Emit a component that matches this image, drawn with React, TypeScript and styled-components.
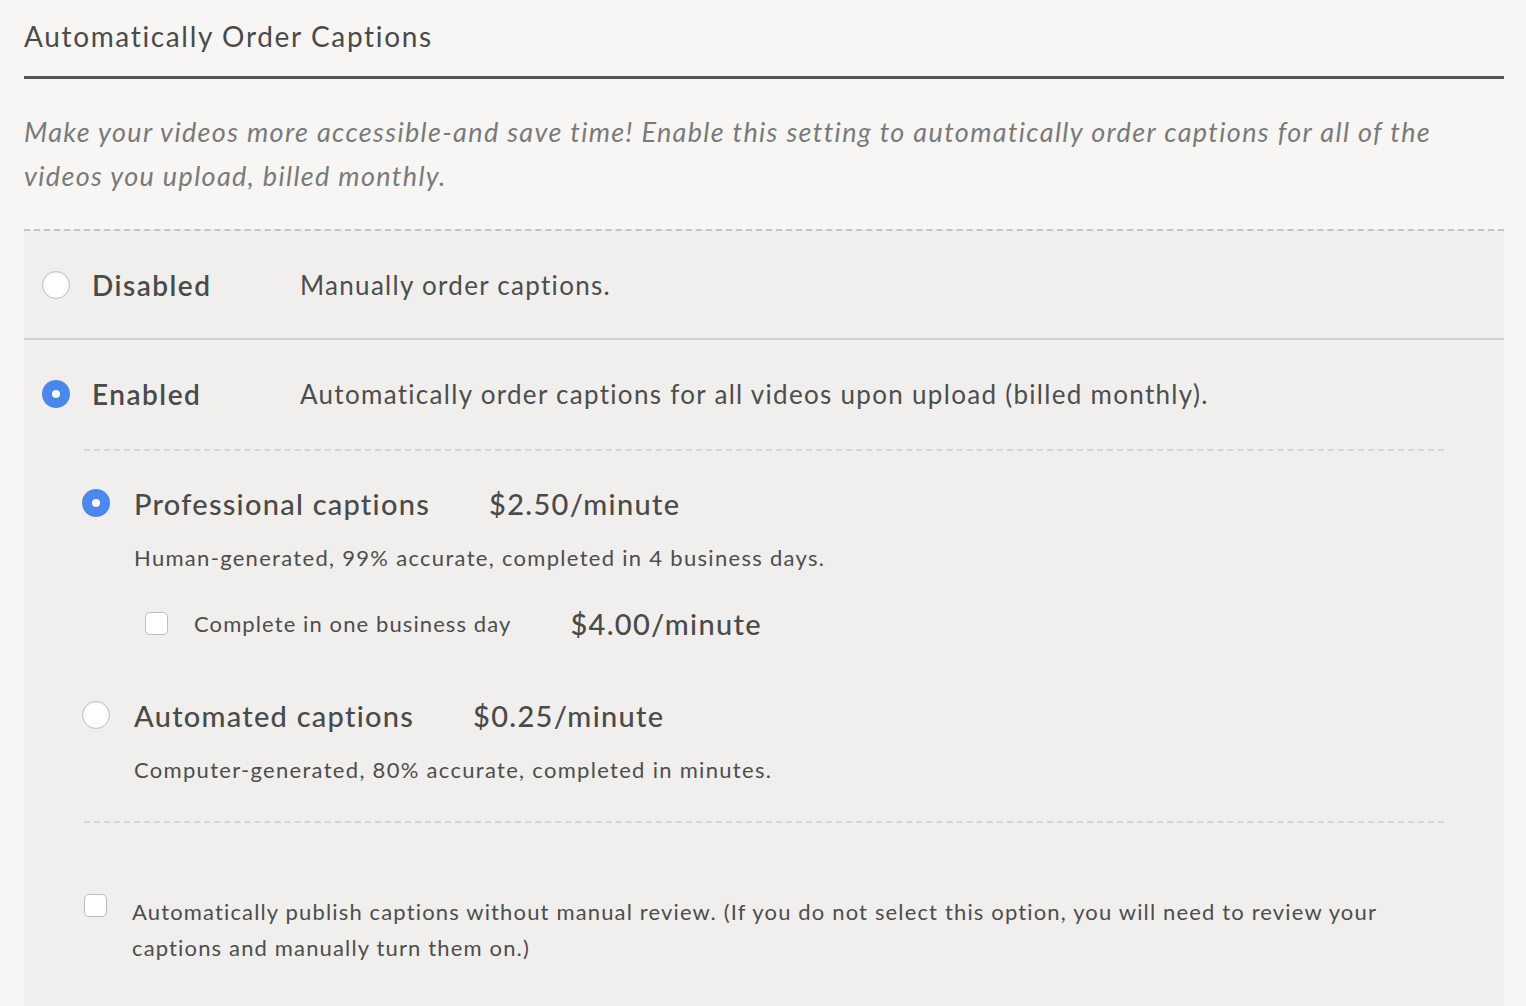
import React from "react";
import styled, { createGlobalStyle } from "styled-components";

const Global = createGlobalStyle`
  html, body { margin: 0; padding: 0; background: #f7f6f4; }
  body { font-family: Lato, "Open Sans", sans-serif; color: #4d4d4d; -webkit-font-smoothing: antialiased; }
`;

const Page = styled.div`
  padding: 0 22px 0 24px;
`;

const Title = styled.h2`
  margin: 0;
  padding-top: 18px;
  font-size: 28px;
  font-weight: 400;
  letter-spacing: 1.65px;
  line-height: 36px;
  padding-bottom: 22px;
  border-bottom: 3px solid #555555;
  color: #4a4a4a;
`;

const Description = styled.p`
  margin: 0;
  padding: 31px 0 31px;
  font-size: 27px;
  font-style: italic;
  line-height: 44px;
  color: #7a7a7a;
  letter-spacing: 1.35px;
`;

const Panel = styled.div`
  background: #f0efed;
  border-top: 2px dashed #c4c4c4;
  min-height: 800px;
`;

const ModeRow = styled.div`
  display: flex;
  align-items: center;
  padding: 0 18px;
  height: 107px;
  border-bottom: 2px solid #d3d2d0;
`;

const EnabledHead = styled.div`
  display: flex;
  align-items: center;
  padding: 37px 18px 0;
  height: 34px;
`;

const RadioDot = styled.span<{ $checked?: boolean; $shift?: number }>`
  flex: none;
  width: 28px;
  height: 28px;
  margin-left: ${(p) => p.$shift ?? 0}px;
  border-radius: 50%;
  box-sizing: border-box;
  position: relative;
  background: ${(p) => (p.$checked ? "#4a87ee" : "#ffffff")};
  border: ${(p) => (p.$checked ? "none" : "1.5px solid #bdbdbd")};
  box-shadow: ${(p) => (p.$checked ? "none" : "inset 0 1px 2px rgba(0,0,0,0.06)")};
  &::after {
    content: "";
    display: ${(p) => (p.$checked ? "block" : "none")};
    position: absolute;
    left: 50%;
    top: 50%;
    width: 8px;
    height: 8px;
    margin: -4px 0 0 -4px;
    border-radius: 50%;
    background: #fff;
  }
`;

const Box = styled.span`
  flex: none;
  width: 23px;
  height: 23px;
  box-sizing: border-box;
  border: 1.5px solid #bdbdbd;
  border-radius: 5px;
  background: #fff;
`;

const ModeLabel = styled.span`
  font-size: 28px;
  font-weight: 600;
  letter-spacing: 1.5px;
  margin-left: 22px;
  width: 208px;
  color: #4a4a4a;
`;

const ModeText = styled.span`
  font-size: 26px;
  letter-spacing: 1.3px;
  color: #4d4d4d;
`;

const Options = styled.div`
  margin: 38px 60px 0;
  border-top: 2px dashed #d6d5d5;
  border-bottom: 2px dashed #d6d5d5;
  padding: 32px 0 36px;
`;

const OptionHead = styled.div`
  display: flex;
  align-items: center;
  height: 40px;
`;

const OptionName = styled.span`
  font-size: 29px;
  font-weight: 500;
  letter-spacing: 1.25px;
  margin-left: 24px;
  margin-right: 59px;
  color: #4a4a4a;
`;

const Price = styled.span`
  font-size: 29px;
  font-weight: 500;
  letter-spacing: 1.3px;
  color: #4a4a4a;
`;

const OptionNote = styled.div`
  margin: 20px 0 0 50px;
  font-size: 22px;
  letter-spacing: 1.3px;
  line-height: 30px;
  color: #4d4d4d;
`;

const RushRow = styled.div`
  display: flex;
  align-items: center;
  margin: 30px 0 0 61px;
  height: 40px;
`;

const RushLabel = styled.span`
  font-size: 22px;
  letter-spacing: 1.1px;
  margin-left: 26px;
  margin-right: 59px;
  color: #4d4d4d;
`;

const OptionBlock = styled.div<{ $top?: number }>`
  margin-top: ${(p) => p.$top ?? 0}px;
`;

const PublishRow = styled.div`
  display: flex;
  align-items: flex-start;
  padding: 71px 60px 40px 60px;
`;

const PublishText = styled.span`
  font-size: 22px;
  letter-spacing: 1.15px;
  line-height: 36px;
  margin-left: 25px;
  max-width: 1290px;
  color: #4d4d4d;
`;

export default function App() {
  return (
    <Page>
      <Global />
      <Title>Automatically Order Captions</Title>
      <Description>
        Make your videos more accessible-and save time! Enable this setting to automatically order captions for all of
        the videos you upload, billed monthly.
      </Description>
      <Panel>
        <ModeRow>
          <RadioDot />
          <ModeLabel>Disabled</ModeLabel>
          <ModeText>Manually order captions.</ModeText>
        </ModeRow>
        <EnabledHead>
          <RadioDot $checked />
          <ModeLabel>Enabled</ModeLabel>
          <ModeText>Automatically order captions for all videos upon upload (billed monthly).</ModeText>
        </EnabledHead>
        <Options>
          <OptionBlock>
            <OptionHead>
              <RadioDot $checked $shift={-2} />
              <OptionName>Professional captions</OptionName>
              <Price>$2.50/minute</Price>
            </OptionHead>
            <OptionNote>Human-generated, 99% accurate, completed in 4 business days.</OptionNote>
            <RushRow>
              <Box />
              <RushLabel>Complete in one business day</RushLabel>
              <Price>$4.00/minute</Price>
            </RushRow>
          </OptionBlock>
          <OptionBlock $top={52}>
            <OptionHead>
              <RadioDot $shift={-2} />
              <OptionName>Automated captions</OptionName>
              <Price>$0.25/minute</Price>
            </OptionHead>
            <OptionNote>Computer-generated, 80% accurate, completed in minutes.</OptionNote>
          </OptionBlock>
        </Options>
        <PublishRow>
          <Box />
          <PublishText>
            Automatically publish captions without manual review. (If you do not select this option, you will need to
            review your captions and manually turn them on.)
          </PublishText>
        </PublishRow>
      </Panel>
    </Page>
  );
}
